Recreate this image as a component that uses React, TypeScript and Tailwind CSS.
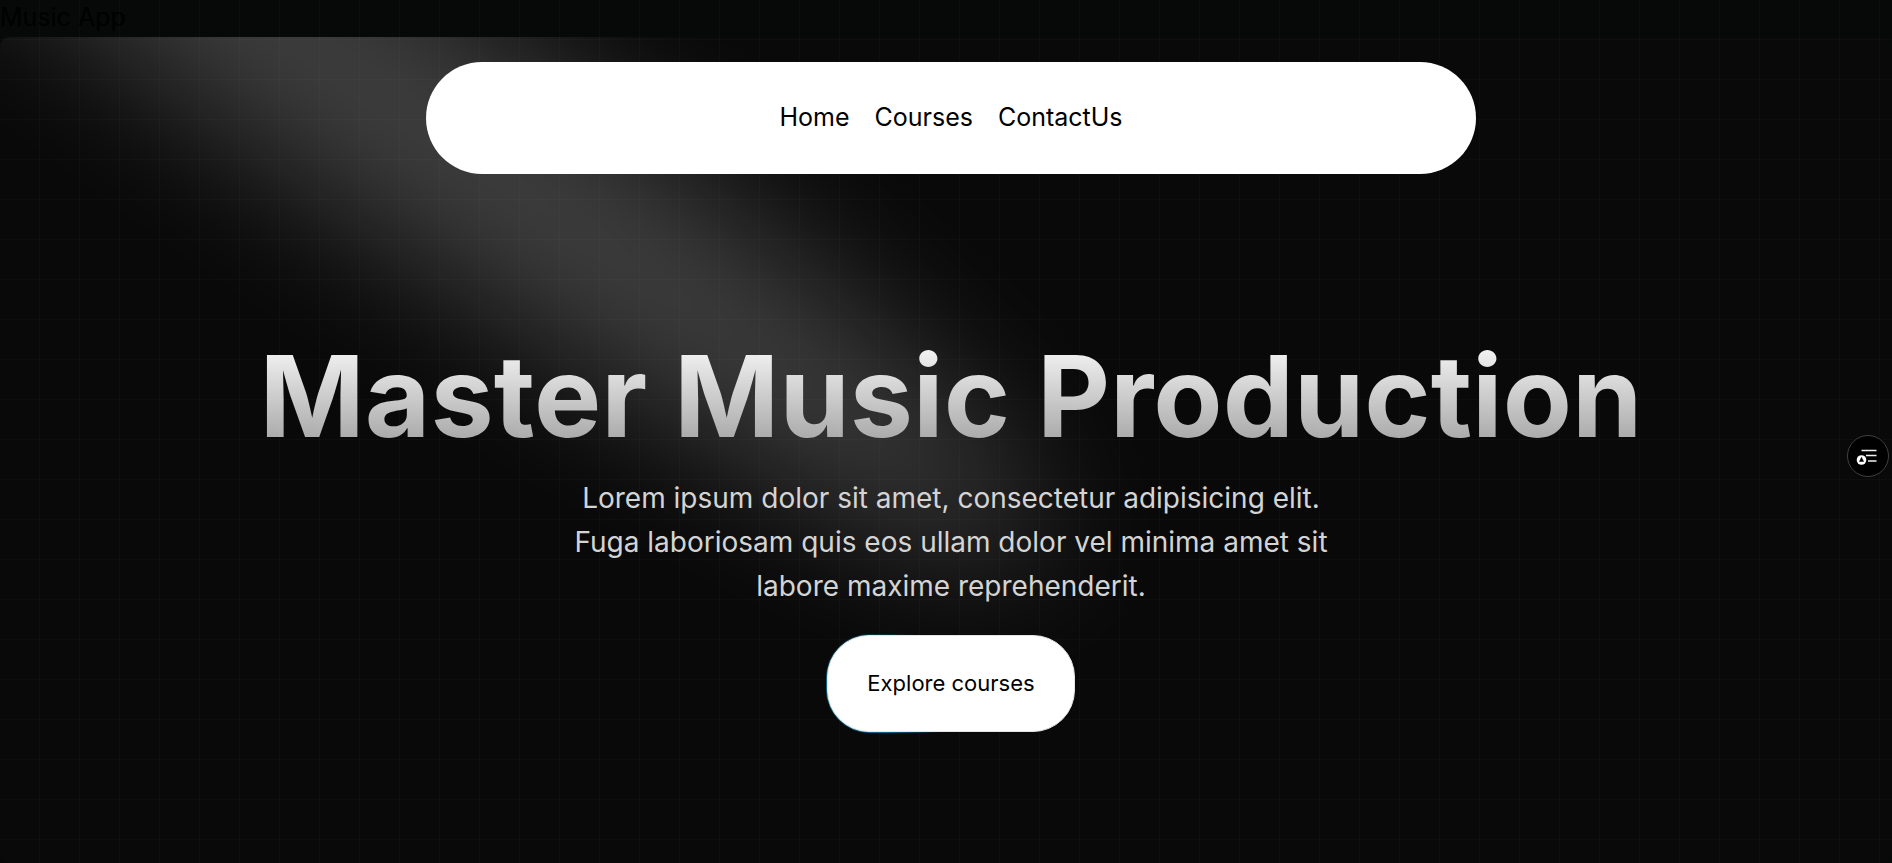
import React from "react";

const links = [
    { label: "Home", href: "#home" },
    { label: "Courses", href: "#courses" },
    { label: "ContactUs", href: "#contact" },
];

/**
 * Spotlight - blurred ellipse shining from the top left corner
 */
function Spotlight() {
    return (
        <svg
            className="pointer-events-none absolute -top-[552px] -left-[432px] w-[85%] overflow-visible"
            viewBox="0 0 3787 2842"
            fill="none"
            aria-hidden="true"
        >
            <g filter="url(#spotlight-blur)">
                <ellipse
                    cx="1924.71"
                    cy="273.501"
                    rx="1924.71"
                    ry="273.501"
                    transform="matrix(-0.822377 -0.568943 -0.568943 0.822377 3631.88 2291.09)"
                    fill="white"
                    fillOpacity="0.22"
                />
            </g>
            <defs>
                <filter
                    id="spotlight-blur"
                    x="-200"
                    y="-200"
                    width="4187"
                    height="3242"
                    filterUnits="userSpaceOnUse"
                    colorInterpolationFilters="sRGB"
                >
                    <feGaussianBlur stdDeviation="168" />
                </filter>
            </defs>
        </svg>
    );
}

function Navbar() {
    return (
        <nav className="mx-auto mt-[25px] flex w-full max-w-[1050px] justify-center gap-[25px] rounded-full bg-white px-12 pt-[37px] pb-[39px] leading-[36px] text-black">
            {links.map((link) => (
                <a key={link.label} href={link.href}>
                    {link.label}
                </a>
            ))}
        </nav>
    );
}

function GlowButton({ children }: { children: React.ReactNode }) {
    return (
        <button className="relative mt-[26px] h-[99px] w-[250px] overflow-hidden rounded-[44px] p-px text-[22px]">
            <span className="absolute -bottom-16 -left-16 h-48 w-48 bg-[radial-gradient(#0ea5e9_30%,transparent_65%)] opacity-60" />
            <span className="relative flex h-full w-full items-center justify-center rounded-[42px] border border-neutral-200 bg-white text-black">
                {children}
            </span>
        </button>
    );
}

function Hero() {
    return (
        <section className="relative flex-1 overflow-hidden rounded-[9px] bg-[#090909] pb-12 pl-[10px]">
            <Spotlight />
            <div className="relative flex flex-col items-center text-center">
                <Navbar />
                <h1 className="mt-[166px] bg-linear-to-b from-neutral-50 to-neutral-400 bg-clip-text text-[113px] leading-[112px] font-bold text-transparent">
                    Master Music Production
                </h1>
                <p className="mt-6 max-w-[800px] text-[28px] leading-[44px] text-neutral-300">
                    Lorem ipsum dolor sit amet, consectetur adipisicing elit. Fuga laboriosam quis eos ullam dolor vel
                    minima amet sit labore maxime reprehenderit.
                </p>
                <GlowButton>Explore courses</GlowButton>
            </div>
        </section>
    );
}

function ReaderButton() {
    return (
        <button
            className="fixed top-[435px] right-[3px] h-[42px] w-[42px] rounded-full border border-neutral-700 bg-black"
            aria-label="Open reading list"
        >
            <svg className="h-full w-full" viewBox="0 0 40 40" fill="none" aria-hidden="true">
                <path d="M13.5 14.5H28.5M18 19.5H28.5M20 25H28.5" stroke="#f0f0f0" strokeWidth="1.6" />
                <circle cx="13.5" cy="24" r="4.8" fill="white" />
                <path d="M13.5 20.8L16 25.8H11Z" fill="black" />
            </svg>
        </button>
    );
}

export default function App() {
    return (
        <main className="relative flex min-h-screen flex-col overflow-hidden bg-[#070908] font-['Inter',sans-serif] text-[25px] text-black">
            <div className="pb-[2px] leading-[35px]">Music App</div>
            <Hero />

            {/* Grid lines over the whole page */}
            <div
                className="pointer-events-none absolute inset-0 bg-[linear-gradient(to_right,transparent_39px,#ffffff05_39px),linear-gradient(to_bottom,transparent_39px,#ffffff05_39px)] bg-size-[40px_40px]"
                aria-hidden="true"
            />
            <ReaderButton />
        </main>
    );
}
